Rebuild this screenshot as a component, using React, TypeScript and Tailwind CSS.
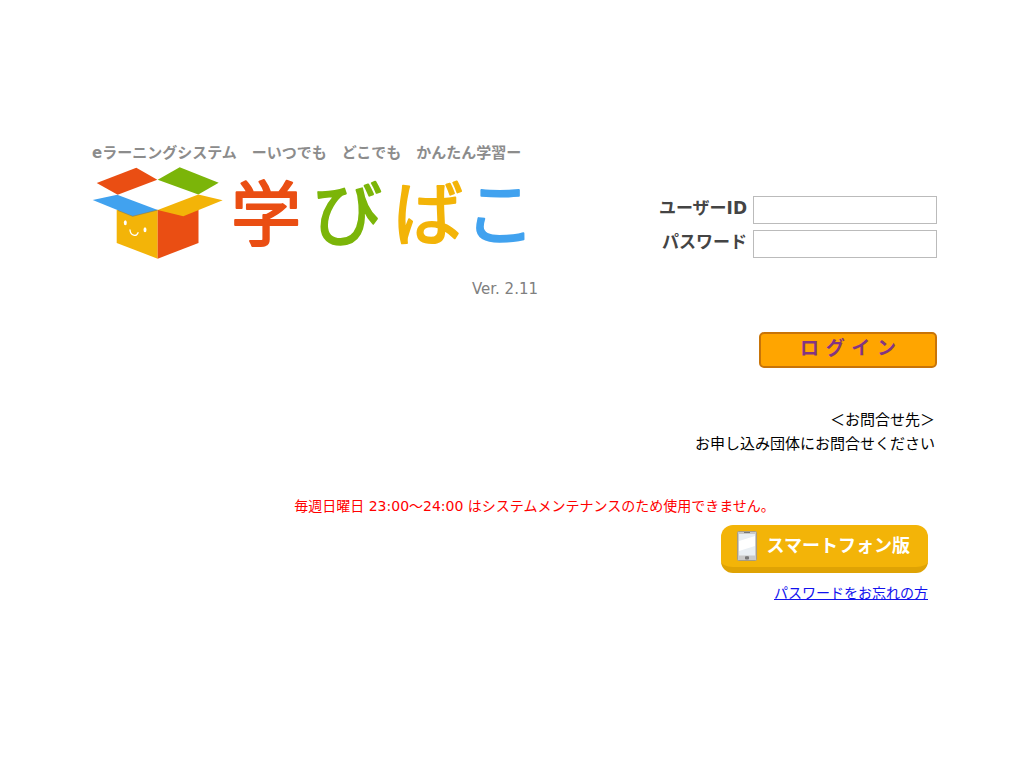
import type { ReactNode } from 'react'

const titleChars = [
  { char: '学', x: 174, color: '#ea4e13' },
  { char: 'び', x: 255, color: '#7bb509' },
  { char: 'ば', x: 336, color: '#f3b408' },
  { char: 'こ', x: 408, color: '#41a2ef' },
]

function Logo() {
  return (
    <svg viewBox="0 -14 446 120" className="-mt-[14px] block w-full" role="img" aria-label="学びばこ">
      {/* box body */}
      <path d="M24.7 45 65.7 45V93.7L24.7 78Z" fill="#f3b408" />
      <path d="M65.7 45H106.5V78L65.7 93.7Z" fill="#ea4e13" />
      {/* lids */}
      <path d="M4.7 18 44.3 2.7 65.3 14.7 25.7 29.7Z" fill="#ea4e13" />
      <path d="M65.7 14.7 87.7 2.3 126.7 17.7 106.3 29.5Z" fill="#7bb509" />
      <path d="M106.3 29.5 130.7 35.3 91.3 51.3 65.7 45Z" fill="#f3b408" />
      <path d="M.7 35 25.2 29.7 65.7 45 40.7 51.3Z" fill="#41a2ef" />
      <path d="M26 45.5 40.7 51.3 65.7 45" fill="none" stroke="#8b7a4a" strokeWidth=".6" />
      {/* face */}
      <ellipse cx="33.3" cy="57.7" rx="1.5" ry="2.5" fill="#fff" />
      <ellipse cx="53" cy="64.7" rx="1.5" ry="2.5" fill="#fff" />
      <path d="M38 65C38.5 71 44.5 72 46 67.7" fill="none" stroke="#fff" strokeWidth="1.3" strokeLinecap="round" />
      {titleChars.map((t) => (
        <text
          key={t.char}
          x={t.x}
          y="75"
          textAnchor="middle"
          fill={t.color}
          stroke={t.color}
          strokeWidth="2"
          strokeLinejoin="round"
          className="font-['Noto_Sans_CJK_JP',sans-serif] text-[70px] leading-none font-normal"
        >
          {t.char}
        </text>
      ))}
    </svg>
  )
}

function PhoneIcon() {
  return (
    <svg viewBox="0 0 20 30" className="h-[30px] w-5 shrink-0" aria-hidden="true">
      <rect x=".5" y=".5" width="19" height="29" rx="1" fill="#c9c9c9" stroke="#a59c85" />
      <rect x="2" y="3" width="16" height="21.5" fill="#e9eff4" />
      <path d="M2 10 18 5V15L2 20Z" fill="#fff" />
      <path d="M7 1.5H13" stroke="#777" strokeWidth="1" />
      <rect x="8" y="25.3" width="4" height="3.2" rx="1" fill="#777" />
    </svg>
  )
}

function Field({ id, type, children }: { id: string; type: string; children: ReactNode }) {
  return (
    <div className="flex items-center justify-end gap-1.5">
      <label htmlFor={id} className="pb-1 text-[17px] leading-6 font-bold text-[#444]">
        {children}
      </label>
      <input id={id} type={type} className="h-7 w-[184px] border border-[#bbb] bg-white px-1 text-[15px]" />
    </div>
  )
}

export default function App() {
  return (
    <main className="min-h-screen bg-white pt-[141px] pr-[87px] pb-10 pl-[92px] font-['DejaVu_Sans','Noto_Sans_CJK_JP',sans-serif] text-black">
      <div className="flex items-start justify-between gap-6">
        <header className="w-[446px]">
          <p className="text-[15px] leading-6 font-bold whitespace-nowrap text-[#8c8c8c]">
            eラーニングシステム　ーいつでも　どこでも　かんたん学習ー
          </p>
          <h1>
            <Logo />
          </h1>
          <p className="mt-1.5 text-right text-[15px] leading-6 text-[#808080]">Ver. 2.11</p>
        </header>

        <form className="flex flex-col items-end pt-[55px]" onSubmit={(e) => e.preventDefault()}>
          <div className="flex flex-col gap-1.5">
            <Field id="user-id" type="text">ユーザーID</Field>
            <Field id="password" type="password">パスワード</Field>
          </div>
          <button
            type="submit"
            className="mt-[74px] h-9 w-[178px] rounded-[5px] border-2 border-[#c87408] bg-[#ffa500] pb-1 text-[19px] leading-6 font-bold text-[#833583]"
          >
            ロ グ イ ン
          </button>
        </form>
      </div>

      <address className="mt-10 pr-0.5 text-right text-[15px] leading-6 not-italic">
        ＜お問合せ先＞
        <br />
        お申し込み団体にお問合せください
      </address>

      <p className="mt-10 pl-10 text-center text-[14px] leading-5 text-[#f00]">
        毎週日曜日 23:00～24:00 はシステムメンテナンスのため使用できません。
      </p>

      <div className="mt-[9px] flex flex-col items-end gap-2.5 pr-[9px]">
        <a
          href="#smartphone"
          className="flex h-12 items-center gap-2.5 rounded-xl border-b-[6px] border-[#dfa304] bg-[#f3b408] pr-[18px] pl-4 text-[18px] font-bold text-white"
        >
          <PhoneIcon />
          <span className="leading-6">スマートフォン版</span>
        </a>
        <a href="#forgot" className="text-[14px] leading-5 text-[#11e] underline">
          パスワードをお忘れの方
        </a>
      </div>
    </main>
  )
}
